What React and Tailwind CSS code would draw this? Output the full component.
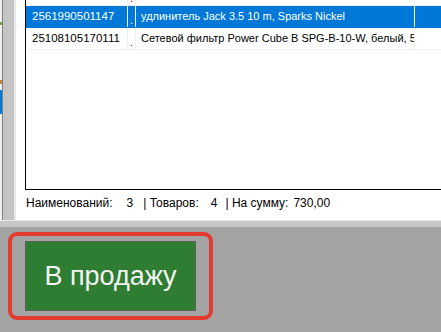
import React from 'react';

const rows = [
  { code: '2565998001011', dot: 'text-[#a00000]', name: 'кабель USB Type-C 1 m, Sparks Nickel', sel: false },
  { code: '2561990501147', dot: 'text-white', name: 'удлинитель Jack 3.5 10 m, Sparks Nickel', sel: true },
  { code: '25108105170111', dot: 'text-[#a00000]', name: 'Сетевой фильтр Power Cube B SPG-B-10-W, белый, 5', sel: false },
];

function Row({ r }) {
  const base = r.sel ? 'bg-[#0078d7] text-white border-[#0078d7]' : 'bg-white text-black border-[#f0f0f0]';
  return (
    <div className={`flex h-[22px] border-b ${base}`}>
      <div className="w-[102px] pl-[6px] flex items-center border-r border-[#f0f0f0] text-[11.5px]">{r.code}</div>
      <div className={`w-[8px] flex items-end justify-center leading-[14px] border-r border-[#f0f0f0] ${r.dot}`}>.</div>
      <div className="w-[279px] pl-[5px] flex items-center border-r border-[#f0f0f0] whitespace-nowrap overflow-hidden">{r.name}</div>
      <div className="flex-1" />
    </div>
  );
}

export default function App() {
  return (
    <div className="w-[441px] h-[332px] overflow-hidden bg-[#a3a3a3] font-['Liberation_Sans',Arial,sans-serif]">
      {/* upper form area */}
      <div className="flex h-[220px]">
        {/* left edge strip */}
        <div className="w-[16px] flex bg-[#c4c4c4]">
          <div className="w-[2px] bg-[#f0f0f0] flex flex-col">
            <div className="h-[22px]" />
            <div className="h-[3px] bg-[#7a9a50]" />
            <div className="h-[55px]" />
            <div className="h-[4px] bg-[#c08040]" />
            <div className="h-[6px]" />
            <div className="h-[24px] bg-[#0078d7]" />
          </div>
          <div className="w-[1px] bg-[#808080]" />
          <div className="flex-1" />
          <div className="w-[2px] bg-[#e8e8e8]" />
        </div>
        {/* white panel */}
        <div className="flex-1 bg-white flex flex-col pl-[9px]">
          <div className="h-[190px] border-l border-b border-black overflow-hidden text-[11px]">
            <div className="-mt-[16px]">
              {rows.map((r, i) => <Row key={i} r={r} />)}
            </div>
          </div>
          <div className="flex items-center h-[26px] text-[12px] text-black">
            <span className="pl-[1px]">Наименований:</span>
            <span className="ml-[14px]">3</span>
            <span className="ml-[10px]">| Товаров:</span>
            <span className="ml-[12px]">4</span>
            <span className="ml-[8px]">| На сумму:</span>
            <span className="ml-[5px]">730,00</span>
          </div>
        </div>
      </div>
      {/* separator */}
      <div className="h-[1px] bg-[#e6e6e6]" />
      <div className="h-[6px] bg-[#c8c8c8]" />
      {/* bottom bar */}
      <div className="flex pl-[8px] pt-[5px]">
        <div className="w-[205px] h-[88px] border-[4px] border-[#e53a2f] rounded-[9px] flex items-center justify-center">
          <button className="w-[171px] h-[70px] bg-[#2e7d32] border border-[#606060] text-[#f4f4f4] text-[27px] leading-none">
            В продажу
          </button>
        </div>
      </div>
    </div>
  );
}
